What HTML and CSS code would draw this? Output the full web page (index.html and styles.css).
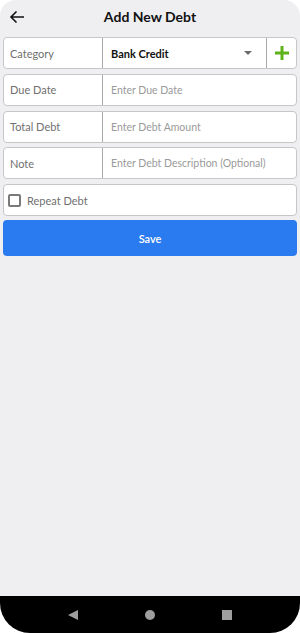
FILE: index.html
```html
<!DOCTYPE html>
<html lang="en">
<head>
  <meta charset="UTF-8" />
  <meta name="viewport" content="width=device-width, initial-scale=1.0"/>
  <title>Add New Debt</title>
  <link rel="stylesheet" href="styles.css">
</head>
<body>
  <div class="phone">
    <div class="screen">
      <div class="header">
        <button class="back" type="button">
          <svg width="16" height="14" viewBox="0 0 16 14"><path d="M15 7H2M7.5 1.5L2 7l5.5 5.5" fill="none" stroke="#111" stroke-width="1.6"/></svg>
        </button>
        <h1>Add New Debt</h1>
      </div>

      <form class="form">
        <div class="row">
          <div class="label">Category</div>
          <div class="field select">
            <span class="value">Bank Credit</span>
            <span class="caret"></span>
          </div>
          <div class="add">
            <svg width="14" height="14" viewBox="0 0 14 14"><path d="M7 0v14M0 7h14" stroke="#5fb31a" stroke-width="3"/></svg>
          </div>
        </div>

        <div class="row">
          <div class="label">Due Date</div>
          <div class="field placeholder">Enter Due Date</div>
        </div>

        <div class="row">
          <div class="label">Total Debt</div>
          <div class="field placeholder">Enter Debt Amount</div>
        </div>

        <div class="row">
          <div class="label">Note</div>
          <div class="field placeholder">Enter Debt Description (Optional)</div>
        </div>

        <div class="row check-row">
          <span class="checkbox"></span>
          <span class="check-label">Repeat Debt</span>
        </div>

        <button type="button" class="button-save">Save</button>
      </form>
    </div>

    <div class="navbar">
      <span class="nav-back"></span>
      <span class="nav-home"></span>
      <span class="nav-recent"></span>
    </div>
  </div>
</body>
</html>
```

FILE: styles.css
```css
body {
  margin: 0;
  padding: 0;
  background-color: #ffffff;
  font-family: Lato, 'Noto Sans', sans-serif;
}
.phone {
  width: 300px;
  height: 633px;
  display: flex;
  flex-direction: column;
  background-color: #efeff1;
  border-radius: 16px 16px 30px 30px;
  overflow: hidden;
}
.screen {
  flex: 1;
}
.header {
  position: relative;
  height: 33px;
  display: flex;
  align-items: center;
  justify-content: center;
}
.back {
  position: absolute;
  left: 9px;
  top: 9px;
  border: none;
  background: none;
  padding: 0;
  width: 16px;
  height: 16px;
  display: flex;
  align-items: center;
}
h1 {
  margin: 0 0 1px;
  font-size: 14px;
  font-weight: 700;
  color: #111;
}
.form {
  padding: 4px 3px 0;
  display: flex;
  flex-direction: column;
  gap: 4.75px;
}
.row {
  height: 32px;
  box-sizing: border-box;
  display: flex;
  align-items: stretch;
  background-color: #fff;
  border: 1px solid #c6c6c8;
  border-radius: 4px;
  font-size: 11px;
}
.label {
  width: 99px;
  box-sizing: border-box;
  padding-left: 6px;
  display: flex;
  align-items: center;
  color: #707070;
  border-right: 1px solid #a9a9a9;
}
.field {
  flex: 1;
  display: flex;
  align-items: center;
  padding-left: 8px;
}
.placeholder {
  color: #9a9a9a;
  font-size: 10.5px;
}
.select {
  justify-content: space-between;
  padding-right: 14px;
}
.value {
  color: #111;
  font-weight: 700;
}
.caret {
  width: 0;
  height: 0;
  border-left: 4px solid transparent;
  border-right: 4px solid transparent;
  border-top: 4px solid #6a6a6a;
}
.add {
  width: 29px;
  border-left: 1px solid #a9a9a9;
  display: flex;
  align-items: center;
  justify-content: center;
}
.check-row {
  align-items: center;
  padding-left: 4px;
  gap: 6px;
}
.checkbox {
  width: 13px;
  height: 13px;
  box-sizing: border-box;
  border: 2px solid #7a7a7a;
  border-radius: 2px;
}
.check-label {
  color: #707070;
}
.button-save {
  height: 36px;
  margin-top: -0.75px;
  border: none;
  border-radius: 4px;
  background-color: #2b7bf0;
  color: #fff;
  font-family: Lato, 'Noto Sans', sans-serif;
  font-size: 11px;
  font-weight: 600;
}
.navbar {
  height: 37px;
  background-color: #000;
  display: flex;
  align-items: center;
  justify-content: center;
  gap: 67px;
}
.nav-back {
  width: 0;
  height: 0;
  border-top: 5.5px solid transparent;
  border-bottom: 5.5px solid transparent;
  border-right: 10px solid #9e9e9e;
}
.nav-home {
  width: 10px;
  height: 10px;
  border-radius: 50%;
  background-color: #9e9e9e;
}
.nav-recent {
  width: 10px;
  height: 10px;
  background-color: #9e9e9e;
}
```
